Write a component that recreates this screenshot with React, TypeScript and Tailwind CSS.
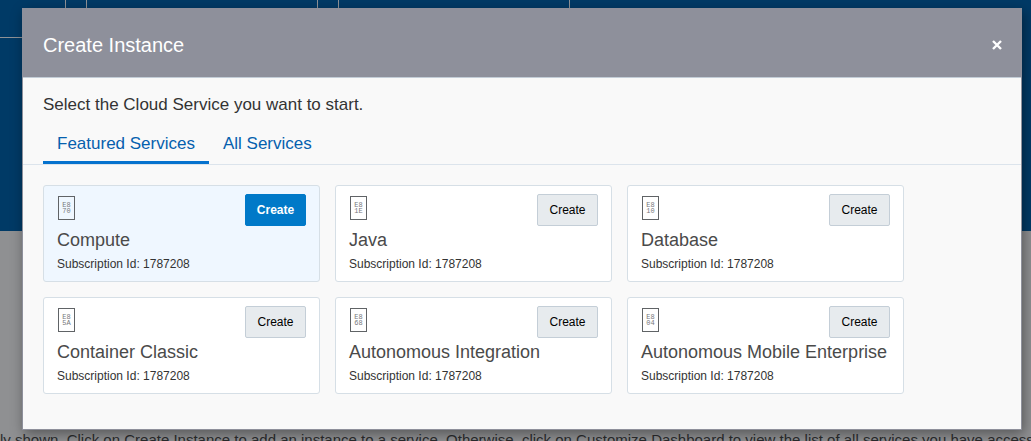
import React from "react";

type Service = { name: string; code: [string, string]; featured?: boolean };

const services: Service[] = [
  { name: "Compute", code: ["E8", "70"], featured: true },
  { name: "Java", code: ["E8", "1E"] },
  { name: "Database", code: ["E8", "10"] },
  { name: "Container Classic", code: ["E8", "5A"] },
  { name: "Autonomous Integration", code: ["E8", "68"] },
  { name: "Autonomous Mobile Enterprise", code: ["E8", "04"] },
];

function CodeIcon({ code }: { code: [string, string] }) {
  return (
    <span className="mt-0.5 ml-px flex h-6 w-[17px] flex-col items-center justify-center border border-[#606366] font-['Liberation_Mono',monospace] text-[7px] leading-[6px] text-[#77797c]">
      <span>{code[0]}</span>
      <span>{code[1]}</span>
    </span>
  );
}

function ServiceCard({ service }: { service: Service }) {
  const { name, code, featured } = service;
  return (
    <li
      className={
        "w-[277px] rounded-[3px] border border-[#d6dfe6] px-[13px] pt-2 pb-[9px] " +
        (featured ? "bg-[#eff7ff]" : "bg-white")
      }
    >
      <div className="flex items-start justify-between">
        <CodeIcon code={code} />
        <button
          type="button"
          aria-label={"Create " + name}
          className={
            "h-8 w-[61px] rounded-[2px] border text-center text-[12px] " +
            (featured
              ? "border-[#0079c8] bg-[#0079c8] font-bold text-white"
              : "border-[#c4ced7] bg-[#e7ebee] text-black")
          }
        >
          Create
        </button>
      </div>
      <h2 className="mt-0.5 text-[18px] leading-6 whitespace-nowrap text-[#4a4a4a]">{name}</h2>
      <p className="mt-1 text-[12px] leading-4 text-[#333]">Subscription Id: 1787208</p>
    </li>
  );
}

export default function App() {
  return (
    <div className="relative h-screen overflow-hidden bg-[#8f9092] font-['Liberation_Sans',Arial,sans-serif]">
      <div aria-hidden="true">
        <div className="flex h-[231px] gap-5 bg-[#003a66]">
          <div className="w-[66px] border-r border-[#8f9296]">
            <div className="h-[38px] border-b border-[#8f9296]" />
          </div>
          <div className="w-[232px] border-x border-[#8f9296]" />
          <div className="w-[232px] border-x border-[#8f9296]" />
        </div>
        <p className="pt-[199px] text-[15px] leading-5 whitespace-nowrap text-[#2b2c2e]">
          ly shown. Click on Create Instance to add an instance to a service. Otherwise, click on
          Customize Dashboard to view the list of all services you have access to.
        </p>
      </div>

      <div className="absolute inset-x-0 top-2 pr-[9px] pl-[22px]">
        <div
          role="dialog"
          aria-labelledby="dialog-title"
          className="border border-t-0 border-[#8e909b] bg-[#f9f9f9] pb-[35px] shadow-[2px_4px_12px_rgba(0,0,0,0.4)]"
        >
          <header className="flex h-[70px] items-center justify-between border-b border-[#c3cdd7] bg-[#8e909b] pr-[19px] pl-5">
            <h1 id="dialog-title" className="pt-1 text-[20px] font-light text-white">
              Create Instance
            </h1>
            <button type="button" aria-label="Close" className="pt-1 text-white">
              <svg width="10" height="10" viewBox="0 0 10 10" fill="none" stroke="currentColor" strokeWidth="2.4">
                <path d="M1 1 L9 9 M9 1 L1 9" />
              </svg>
            </button>
          </header>
          <p className="px-5 pt-[17px] text-[17px] leading-5 text-[#333]">
            Select the Cloud Service you want to start.
          </p>
          <nav className="mt-[9px] flex border-b border-[#dce4ec] px-5 text-[17px] leading-5 text-[#0560ae]">
            <a href="#featured" aria-current="page" className="border-b-[3px] border-[#0572ce] px-3.5 pt-2.5 pb-[7px]">
              Featured Services
            </a>
            <a href="#all" className="px-3.5 pt-2.5 pb-[7px]">
              All Services
            </a>
          </nav>
          <ul className="flex flex-wrap gap-[15px] px-5 pt-5">
            {services.map((s) => (
              <ServiceCard key={s.name} service={s} />
            ))}
          </ul>
        </div>
      </div>
    </div>
  );
}
